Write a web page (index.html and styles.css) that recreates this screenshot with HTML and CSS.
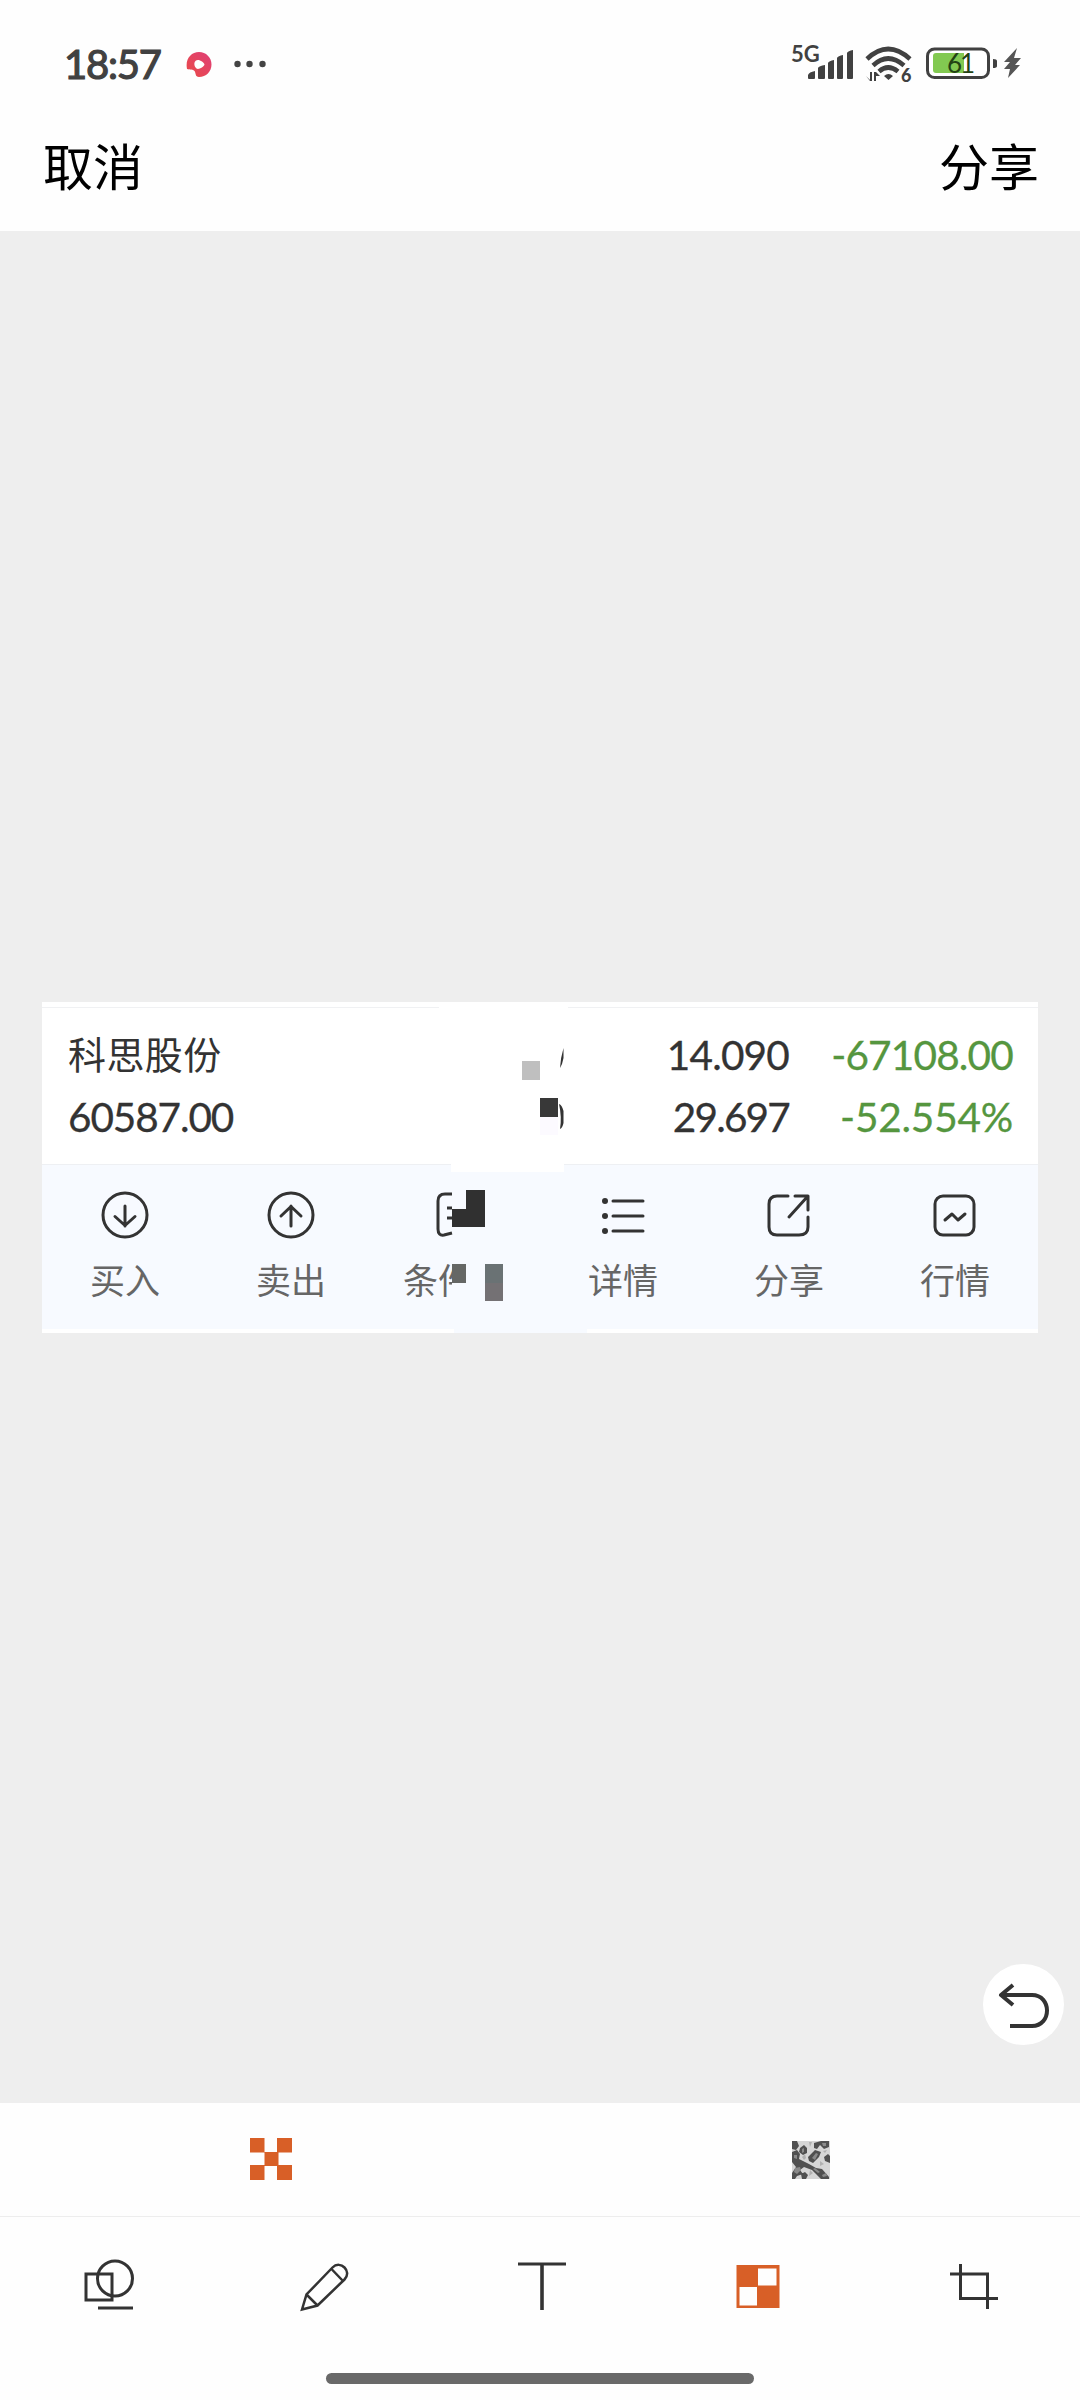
FILE: index.html
```html
<!DOCTYPE html>
<html lang="zh-CN">
<head>
<meta charset="utf-8">
<title>编辑图片</title>
<link rel="stylesheet" href="styles.css">
</head>
<body>
<header class="status">
  <span class="clock">18:57</span>
  <svg class="app-dot" width="26" height="26" viewBox="0 0 26 26"><defs><linearGradient id="red" x1="0" y1="1" x2="1" y2="0"><stop offset="0" stop-color="#ea4a46"/><stop offset="1" stop-color="#df3f78"/></linearGradient></defs><path fill="url(#red)" fill-rule="evenodd" d="M1 17C-1 7 5 0 13 0c7 0 12.500 5.500 12.500 12.500S20 25 13 25c-4 0-3-4-4.500-6S4 18 1 17ZM10 8.500c-2.500 2-2 6 .5 8 2 1.500 7.500-1.500 8-4-.5-2.500-6-6-8.500-4Z"/></svg>
  <svg class="dots" width="32" height="8" viewBox="0 0 32 8" fill="#444"><circle cx="3.500" cy="4" r="3.200"/><circle cx="15.500" cy="4" r="3.200"/><circle cx="28.500" cy="4" r="3.200"/></svg>
  <div class="signals">
    <div class="cell"><span class="net">5G</span>
      <svg width="46" height="30" viewBox="0 0 46 30" fill="#414141"><path d="M0 29v-3q1-3 7-4v7q0 1-1 1H1q-1 0-1-1ZM10 29V19q1-2 7-3v13q0 1-1 1h-5q-1 0-1-1ZM20 29V14q1-2 6-3v18q0 1-1 1h-4q-1 0-1-1ZM29 29V9q1-2 6-3v23q0 1-1 1h-4q-1 0-1-1ZM39 29V4q1-2 6-3v28q0 1-1 1h-4q-1 0-1-1Z"/></svg>
    </div>
    <svg class="wifi" width="48" height="38" viewBox="0 0 48 38"><g fill="none" stroke="#414141" stroke-width="4.600"><path d="M2 13q21-20 43 0M8 19.500q15-14 31 0M14 25.500q9-8 19 0"/></g><path d="M19 30q4.500-4 9 0l-4.500 4ZM1 30l4 4v-8h2v9H5ZM9 35v-9h2l4 4h-4v5Z" fill="#414141"/><text class="wifi-gen" x="36" y="35.500">6</text></svg>
    <svg class="battery" width="100" height="34" viewBox="0 0 100 34"><rect x="1.500" y="2" width="61" height="28.500" rx="7" fill="#fff" stroke="#414141" stroke-width="3"/><path d="M10 6h28v20H10q-3 0-3-3V9q0-3 3-3Z" fill="#82c951"/><path d="M67 12q4 0 4 2v5q0 2-4 2Z" fill="#414141"/><text class="level" x="21" y="25.500">61</text><path d="M91 1 78 15h6l-6 7h6l-2 9 12-13h-5l6-7h-7Z" fill="#555"/></svg>
  </div>
</header>
<nav class="title"><span>取消</span><span>分享</span></nav>
<main class="canvas">
  <section class="card">
    <div class="rule"></div>
    <div class="quote">
      <div class="name"><b class="cjk">科思股份</b><b class="n1">60587.00</b></div>
      <div class="price"><b>14.090</b><b class="n2">29.697</b></div>
      <div class="loss"><b class="n3">-67108.00</b><b class="n4">-52.554%</b></div>
    </div>
    <div class="actions">
      <div class="action"><svg viewBox="0 0 50 50"><circle cx="25" cy="25" r="22"/><path d="M25 16v20M15 26.500l10 9 10-9"/></svg><span>买入</span></div>
      <div class="action"><svg viewBox="0 0 50 50"><circle cx="25" cy="25" r="22"/><path d="M25 36V16M15 26l10-9.500L35 26"/></svg><span>卖出</span></div>
      <div class="action"><svg viewBox="0 0 50 50"><path stroke-linecap="butt" d="M20 4h-7q-7 0-7 7v28q0 7 6 6l8-2M15 18h5M15 28h5"/></svg><span class="cut">条件</span></div>
      <div class="action"><svg viewBox="0 0 50 50"><path d="M15 11h30M15 26h30M15 41h30"/><g fill="#333" stroke="none"><circle cx="7" cy="11" r="3"/><circle cx="7" cy="26" r="3"/><circle cx="7" cy="41" r="3"/></g></svg><span>详情</span></div>
      <div class="action"><svg viewBox="0 0 50 50"><path d="M24 6H13q-8 0-8 8v23q0 8 8 8h22q9 0 9-8V27M31 6h13v14M44 6 25 27"/></svg><span>分享</span></div>
      <div class="action"><svg viewBox="0 0 50 50"><rect x="5" y="6" width="39" height="39" rx="8"/><path d="m15 30 7-6 6 6 7-6"/></svg><span>行情</span></div>
    </div>
    <svg class="mosaic" width="996" height="331" viewBox="0 0 996 331" shape-rendering="crispEdges">
      <path fill="#fff" d="M397 0h129v8h-4v162H409v-14h-12Z"/>
      <path fill="#f7faff" d="M412 326h133v5H412Z"/>
      <g shape-rendering="auto" fill="#333"><path d="M521.500 46v10q-1 6-3.500 10 .5-10 3.500-20ZM517 102q3 1 4.500 7v12q-1 5-3.500 6 2-12-1-25Z"/></g>
      <path fill="#bfbfbf" d="M480 59h18v19h-18Z"/><path fill="#383838" d="M498 96h18v19h-18Z"/><path fill="#fcfaff" d="M498 115h18v18h-18Z"/>
      <path fill="#303030" d="M424 188h19v37h-33v-18h14Z"/>
      <path fill="#656765" d="M410 262h14v19h-14Z"/><path fill="#6a7274" d="M443 262h18v19h-18Z"/><path fill="#747174" d="M443 281h18v18h-18Z"/>
    </svg>
  </section>
  <div class="undo"><svg width="82" height="82" viewBox="0 0 82 82"><path d="M30 21 18 31l12 10M18 31h31c20 0 20 31 0 31H27"/></svg></div>
</main>
<div class="modes">
  <div><svg class="blocks" width="42" height="42" viewBox="0 0 42 42" fill="#d85f27"><path d="M0 0h14.500v14.500H0ZM27 0h15v14.500H27ZM14.500 14h14v14h-14ZM0 27h14.500v15H0ZM27 27h15v15H27Z"/></svg></div>
  <div><svg class="noise" width="38" height="38" viewBox="0 0 38 38"><path fill="#d6d6d6" d="M0 0h38v38H0Z"/><path fill="#505050" d="M0 0h5l2 5-3 4-4-1ZM8 7l4-3 3 3v5l-4 2-4-3ZM0 11l5-2 3 4-1 5 10 5 7 4 6 1 7 8v2h-8l-9-9-8-3-4 3 3 4-6 2-2 3H0v-6l4-6-4-5ZM16 16l7-7 6 2-2 5-6 6-4-2ZM22 2l7-2h8v6l-5 2-4-4-3 4-3-1ZM32 16l4-3 2 2v7l-5-2ZM9 33l4-2 3 3-2 4H10Z"/><g fill="#8a8a8a"><path d="m20 17 4-5 2 1-3 6ZM3 27l5-1 1 3-4 4-3-2ZM23 27l5 4-2 1-5-4ZM10 8l2-1v4l-2 1ZM2 14h3v4l-3-1ZM30 2h4v3h-3ZM30 34l4-2 1 3-4 1Z"/></g><g fill="#b0b0b0"><path d="M10 16l3-3 1 4-2 2ZM17 1h3l-2 5ZM28 20l4 3-4 2ZM18 29l3 3-4 3ZM31 10l4-1-2 3Z"/></g></svg></div>
</div>
<footer class="tools">
  <div><svg viewBox="0 0 60 60"><path d="M8 19h26v26H8ZM20 53h35"/><circle cx="37" cy="23.500" r="17.500"/></svg></div>
  <div><svg viewBox="0 0 60 60" class="thin"><path d="m8 54.500 4.500-15 26-27c8-8 20 4 12 12L23.500 50.500ZM12.500 39.500l11 11M37.500 14l11.500 12"/></svg></div>
  <div><svg viewBox="0 0 60 60"><path d="M8 9h48"/><path d="M32 9v46" stroke-width="3.600"/></svg></div>
  <div><svg viewBox="0 0 60 60"><path stroke="none" fill="#d85f27" fill-rule="evenodd" d="M10.500 10h43v43h-43ZM32 13.500v17h18.500v-17ZM13.500 32v18.500H31V32Z"/></svg></div>
  <div><svg viewBox="0 0 60 60"><path d="M8 19h37.500v35M18.500 9v34.500H56"/></svg></div>
</footer>
<div class="home"></div>
</body>
</html>
```
FILE: styles.css
```css
* { box-sizing: border-box; }
body { margin: 0; width: 1080px; height: 2400px; background: #fefefe; display: flex; flex-direction: column; font-family: Lato, "Noto Sans CJK SC", sans-serif; overflow: hidden; }
svg { display: block; flex: none; }
.status { height: 105px; padding: 0 54px 0 64px; display: flex; align-items: flex-start; color: #414141; }
.clock { width: 122px; padding-top: 40px; font-size: 40px; line-height: 48px; font-weight: 400; letter-spacing: -1.200px; -webkit-text-stroke: 1.200px #414141; }
.app-dot { margin-top: 52px; }
.dots { margin: 60px 0 0 22px; }
.signals { margin-left: auto; display: flex; align-items: flex-start; }
.cell { display: flex; width: 74px; margin-top: 45px; }
.net { width: 17px; font-size: 22px; line-height: 17px; font-weight: 700; white-space: nowrap; }
.cell svg { margin-top: 4px; }
.wifi { margin-top: 46px; }
.wifi-gen { font-size: 18px; font-weight: 900; fill: #414141; }
.battery { margin: 47px 0 0 13px; }
.level { font-size: 26px; fill: #234313; letter-spacing: -2px; }
.title { height: 126px; padding: 22px 41px 0 43px; display: flex; justify-content: space-between; font-family: "Noto Sans CJK SC", sans-serif; font-size: 50px; line-height: 74px; color: #000; }
.canvas { position: relative; height: 1872px; padding: 771px 42px 0; background: #eee; }
.card { position: relative; height: 331px; background: #fff; color: #333; }
.rule { height: 6px; border-bottom: 1px solid #f0f1f3; }
.quote { height: 157px; padding: 23px 25px 0 26px; display: flex; border-bottom: 1px solid #eef0f3; }
.quote > div { display: flex; flex-direction: column; gap: 14px; }
.quote b { font-weight: 400; font-size: 40.500px; line-height: 48px; white-space: nowrap; letter-spacing: -0.800px; -webkit-text-stroke: 0.300px currentColor; }
.quote .cjk { position: relative; top: -2px; font-family: "Noto Sans CJK SC", sans-serif; font-size: 38px; letter-spacing: 0.400px; -webkit-text-stroke: 0; }
.quote .n1 { letter-spacing: -1.100px; }
.quote .n2 { letter-spacing: -1.800px; }
.quote .n4 { letter-spacing: -0.200px; }
.price { margin-left: auto; width: 140px; align-items: flex-end; }
.loss { width: 224px; align-items: flex-end; color: #55963f; }
.actions { height: 167px; display: flex; background: #f7faff; border-bottom: 3px solid #fff; }
.action { width: 166px; display: flex; flex-direction: column; align-items: center; padding-top: 25px; color: #666; }
.action svg { width: 50px; height: 50px; fill: none; stroke: #333; stroke-width: 3; stroke-linecap: round; stroke-linejoin: round; }
.action span { margin-top: 15px; font-family: "Noto Sans CJK SC", sans-serif; font-size: 35px; line-height: 48px; }
.action .cut { width: 49px; margin-right: 59px; overflow: hidden; white-space: nowrap; }
.mosaic { position: absolute; left: 0; top: 0; }
.undo { position: absolute; right: 16px; top: 1733px; width: 81px; height: 81px; border-radius: 50%; background: #fff; }
.undo svg { fill: none; stroke: #333; stroke-width: 4; stroke-linejoin: round; }
.modes { height: 114px; display: flex; border-bottom: 1px solid #ededed; }
.modes > div { width: 540px; display: flex; justify-content: center; padding-top: 35px; }
.blocks { margin-left: 2px; }
.noise { margin-top: 3px; margin-left: 2px; }
.tools { height: 156px; padding-top: 38px; display: flex; }
.tools > div { width: 216px; display: flex; justify-content: center; }
.tools svg { width: 60px; height: 60px; fill: none; stroke: #333; stroke-width: 3; }
.tools .thin { stroke-width: 2.500; }
.home { width: 428px; height: 11px; margin-left: 326px; border-radius: 6px; background: #696969; }
```
